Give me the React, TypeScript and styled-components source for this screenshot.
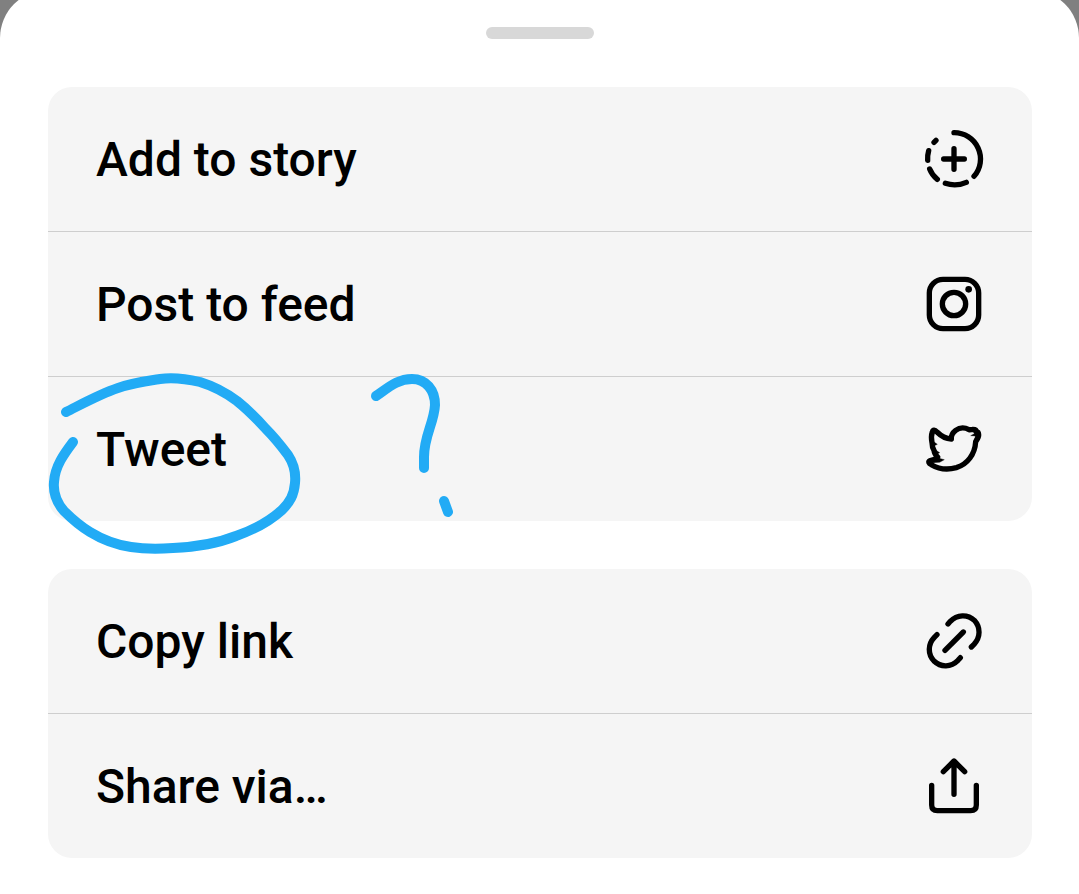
import React from 'react';
import styled, { createGlobalStyle } from 'styled-components';

const GlobalStyle = createGlobalStyle`
  * { box-sizing: border-box; }
  html { background: #808080; }
  body {
    margin: 0;
    font-family: Roboto, 'Liberation Sans', sans-serif;
  }
`;

const Backdrop = styled.div`
  display: flex;
  min-height: 100vh;
  background: #808080;
`;

const Sheet = styled.main`
  flex: 1;
  display: flex;
  flex-direction: column;
  gap: 48px;
  margin-top: -10px;
  padding: 37px 47px 36px 48px;
  border-radius: 48px 48px 0 0;
  background: #fff;
`;

const Handle = styled.div`
  align-self: center;
  width: 108px;
  height: 12px;
  border-radius: 6px;
  background: #d8d8d8;
`;

const Group = styled.ul`
  margin: 0;
  padding: 0;
  list-style: none;
  border-radius: 24px;
  background: #f5f5f5;
`;

const Item = styled.li`
  position: relative;
  & + & {
    border-top: 1px solid #cecece;
  }
`;

const Action = styled.button`
  display: flex;
  align-items: center;
  justify-content: space-between;
  width: 100%;
  height: 144px;
  padding: 0 38px 0 48px;
  border: 0;
  background: transparent;
  color: #000;
  font: 500 48px/56px Roboto, 'Liberation Sans', sans-serif;
  text-align: left;
  cursor: pointer;
`;

const Label = styled.span`
  padding-top: 2px;
`;

const Glyph = styled.svg`
  flex: none;
  width: 80px;
  height: 80px;
  fill: none;
  stroke: #000;
  stroke-width: 16px;
  stroke-linecap: round;
  stroke-linejoin: round;
`;

const Scribble = styled.svg`
  position: absolute;
  top: -17px;
  left: 0;
  width: 420px;
  height: 200px;
  fill: none;
  stroke: #22abf5;
  stroke-width: 10px;
  stroke-linecap: round;
  stroke-linejoin: round;
  pointer-events: none;
`;

const StoryIcon = () => (
  <Glyph viewBox="0 -3 240 240" aria-hidden="true">
    <path d="M120 38A79 79 0 0 1 180 169" />
    <path d="M157 187Q126 201 94 190" />
    <path d="M70 178Q54 165 47 147" />
    <path d="M41 121Q40 106 44 92" />
    <path d="M60 67L66 61" />
    <path d="M120 86V148M89 117H151" />
  </Glyph>
);

const InstagramIcon = () => (
  <Glyph viewBox="0 0 240 240" aria-hidden="true">
    <rect x="46" y="46" width="148" height="148" rx="41" />
    <circle cx="120" cy="120" r="35" />
    <circle cx="164" cy="76" r="10" fill="#000" stroke="none" />
  </Glyph>
);

const TwitterIcon = () => (
  <Glyph viewBox="0 -3 240 240" aria-hidden="true">
    <path d="M112 87C96 86 80 77 69 66C62 58 57 60 55 66C51 77 52 88 54 98C54 108 57 116 60 121C61 129 65 136 71 141C64 148 55 151 48 152C42 155 44 160 52 164C72 176 101 180 127 173C161 163 183 132 185 95C190 88 194 80 194 75C194 68 191 65 187 65C187 58 181 58 177 58C172 59 169 60 165 59C152 52 136 53 125 61C116 68 111 77 112 87Z" />
    <path fill="#000" strokeWidth="1" d="M55 92L70 103L60 108L55 101Z" />
    <path fill="#000" strokeWidth="1" d="M61 117L77 128L66 134Z" />
    <path fill="#000" strokeWidth="1" d="M66 142L91 149L77 157L57 158Z" />
    <path fill="#000" strokeWidth="1" d="M169 64L184 69L170 77L184 78L182 88L193 72L184 60Z" />
  </Glyph>
);

const LinkIcon = () => (
  <Glyph viewBox="0 3 240 240" aria-hidden="true">
    <path d="M102 72L109 64C129 43 161 42 181 61C200 82 200 111 180 133L172 141" />
    <path d="M69 104L61 112C41 133 41 163 60 183C81 203 111 202 132 181L139 173" />
    <path d="M93 151L148 96" />
  </Glyph>
);

const ShareIcon = () => (
  <Glyph viewBox="0 0 240 240" aria-hidden="true">
    <path d="M120 145V46M88 77L120 45L152 77" />
    <path d="M53 118V177Q53 194 70 194H170Q187 194 187 177V118" />
  </Glyph>
);

const Annotation = () => (
  <Scribble viewBox="48 360 420 200" aria-hidden="true">
    <path d="M66 412C82 404 100 394 118 388C132 383 147 381 160 379C174 377 187 379 200 382C213 386 225 392 237 401C247 409 257 419 266 429C275 438 282 447 288 455C294 464 296 473 295 483C294 495 290 502 282 510C271 520 253 530 236 536C216 544 195 547 173 548C158 549 144 549 131 547C117 545 103 540 90 532C80 526 72 519 64 511C57 503 53 493 54 482C55 466 64 454 73 442" />
    <path d="M376 396C388 388 397 379 412 379C426 379 435 390 435 405C434 423 424 436 424 457V468" />
    <path d="M444 501L448 512" />
  </Scribble>
);

type Entry = { label: string; Icon: React.FC; marked?: boolean };

const groups: Entry[][] = [
  [
    { label: 'Add to story', Icon: StoryIcon },
    { label: 'Post to feed', Icon: InstagramIcon },
    { label: 'Tweet', Icon: TwitterIcon, marked: true },
  ],
  [
    { label: 'Copy link', Icon: LinkIcon },
    { label: 'Share via…', Icon: ShareIcon },
  ],
];

export default function App() {
  return (
    <Backdrop>
      <GlobalStyle />
      <Sheet>
        <Handle />
        {groups.map((entries) => (
          <Group key={entries[0].label}>
            {entries.map(({ label, Icon, marked }) => (
              <Item key={label}>
                <Action type="button">
                  <Label>{label}</Label>
                  <Icon />
                </Action>
                {marked && <Annotation />}
              </Item>
            ))}
          </Group>
        ))}
      </Sheet>
    </Backdrop>
  );
}
